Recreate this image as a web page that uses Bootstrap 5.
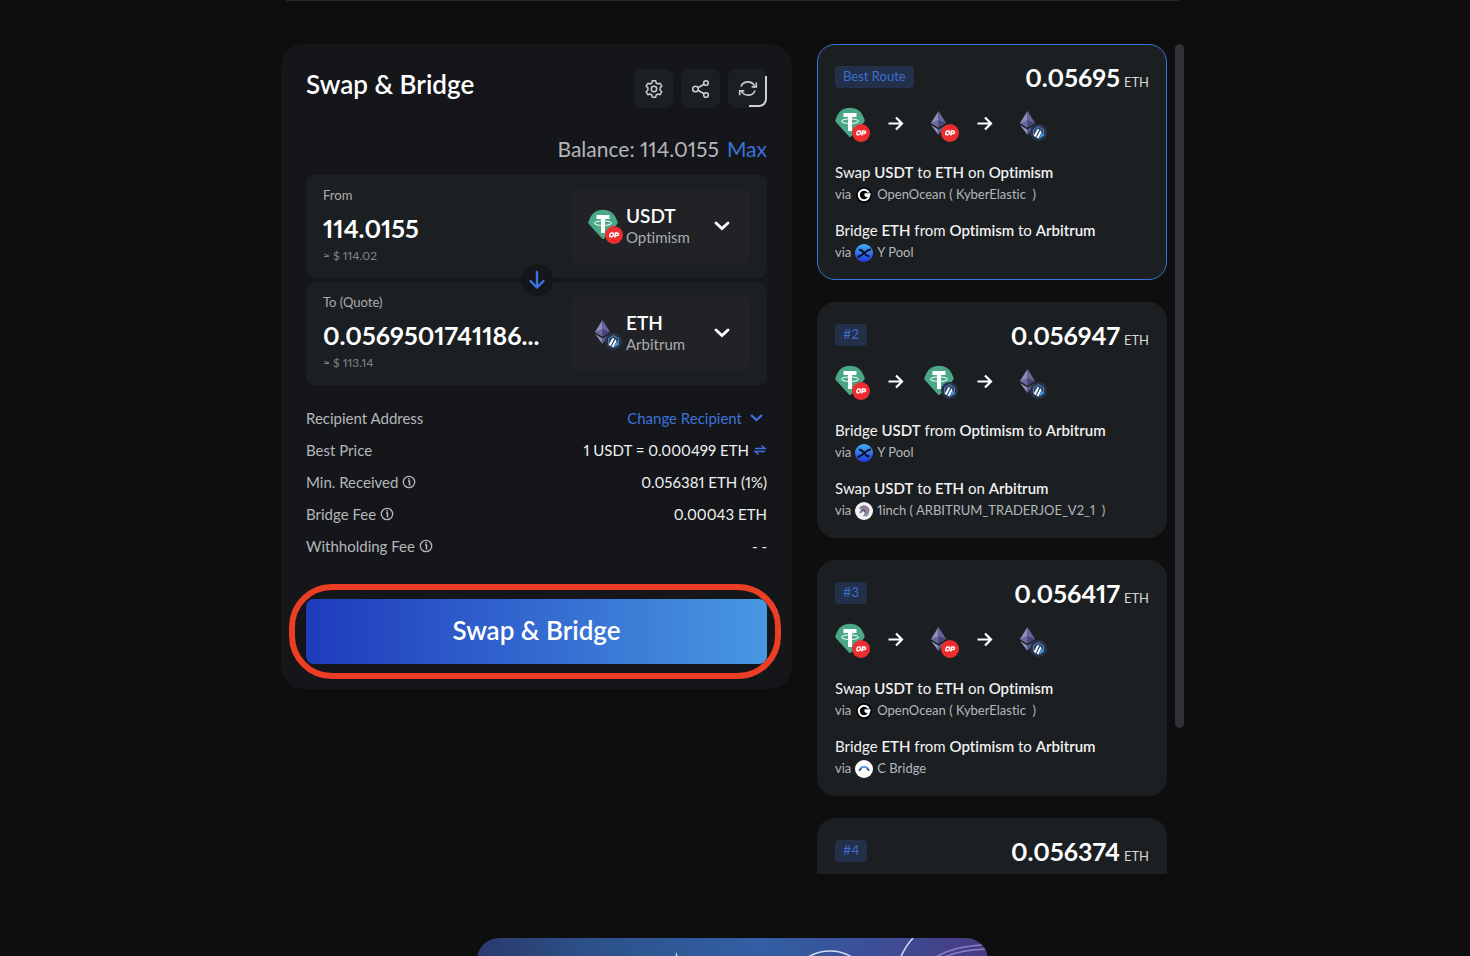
<!DOCTYPE html>
<html lang="en" data-bs-theme="dark">
<head>
<meta charset="utf-8">
<meta name="viewport" content="width=device-width, initial-scale=1">
<title>Swap &amp; Bridge</title>
<link href="https://cdn.jsdelivr.net/npm/bootstrap@5.3.0/dist/css/bootstrap.min.css" rel="stylesheet">
<style>
  :root { --accent: #3b72dc; --panel: #1c1f22; --card-bg: #15161a; --soft: #b4b7ba; }
  body { background: #0e0e0e; color: #f2f2f2; font-family: Lato, "Liberation Sans", sans-serif; font-size: 15px; line-height: 22px; font-variant-ligatures: none; font-variant-numeric: proportional-nums; }
  input, button { font-variant-ligatures: inherit; font-variant-numeric: inherit; }
  .page { height: 100vh; overflow: hidden; padding-right: 5px; }
  .top-rule { max-width: 893px; height: 1px; background: #26282b; }
  .shell { max-width: 903px; padding-top: 43px; grid-template-columns: 511fr 367fr; gap: 25px; }
  .swap-card { min-width: 0; background: var(--card-bg); border-radius: 22px; padding: 25px; }
  .routes { min-width: 0; height: 830px; }
  .route-list { gap: 22px; }
  .title { font-size: 26px; line-height: 30px; font-weight: 600; }
  .tool { width: 39px; height: 39px; padding: 0; border: 0; border-radius: 8px; background: var(--panel); color: #c9ccd0; display: flex; align-items: center; justify-content: center; }
  .timer { right: -1px; bottom: 0; }
  .balance { font-size: 21px; line-height: 28px; color: var(--soft); margin-top: 27px; margin-bottom: 12px; }
  .blue, .blue:hover { color: var(--accent); text-decoration: none; background: none; border: 0; padding: 0; }
  .panel { background: var(--panel); border-radius: 8px; padding: 12px 17px 15px; height: 103px; }
  .panel label, .fiat { font-size: 13px; line-height: 16px; color: #a9acaf; }
  .panel .fiat { font-size: 12px; color: #7f858c; }
  .amount { font-size: 25px; line-height: 32px; font-weight: 700; color: #fff; background: none; border: 0; padding: 0; width: 100%; margin: 9px 0 4px; text-overflow: ellipsis; outline: 0; }
  .amount-box { width: 228px; }
  .token { width: 179px; height: 76px; margin-top: 1px; background: #202226; border: 0; border-radius: 8px; padding: 0 20px 0 17px; color: #fff; }
  .token-text { margin-left: 2px; }
  .token-name { font-size: 19px; line-height: 22px; font-weight: 600; }
  .token-chain { line-height: 20px; color: #a9acaf; }
  .flip { width: 32px; height: 32px; border-radius: 50%; background: var(--card-bg); border: 0; padding: 0; color: var(--accent); display: flex; align-items: center; justify-content: center; }
  .details { margin-top: 17px; color: var(--soft); }
  .details dt { font-weight: 400; }
  .details dd { color: #f0f0f0; }
  .details > div { height: 32px; }
  .cta-wrap { margin-top: 37px; }
  .cta { height: 65px; border: 0; border-radius: 8px; padding: 0 0 4px; color: #fff; font-size: 26px; font-weight: 600; background: linear-gradient(90deg, #1f3bbd, #4898e2); }
  .ring { inset: -15px -14px -15px -17px; border: 6px solid #ec3e24; border-radius: 43px; pointer-events: none; }
  .route { height: 236px; flex: none; background: var(--panel); border: 1px solid var(--panel); border-radius: 18px; padding: 16px 17px; }
  .route.best { border-color: var(--accent); }
  .route-head { height: 32px; }
  .tag { font-size: 13px; line-height: 18px; padding: 1px 8px 3px; border-radius: 4px; background: #22304a; color: #3d6fd0; }
  .quote { font-size: 25px; line-height: 32px; font-weight: 700; color: #fff; }
  .unit { font-size: 13px; line-height: 16px; color: #d5d6d8; font-weight: 400; }
  .hops { margin: 13px 0 19px; }
  .hops > :nth-child(even) { margin: 0 18px 0 17px; }
  .step + .step { margin-top: 13px; }
  .step b { font-weight: 600; }
  .via { font-size: 13px; line-height: 23px; color: var(--soft); }
  .thumb { width: 9px; height: 82.4%; background: #2e3236; border-radius: 5px; }
  .promo { max-width: 511px; height: 160px; margin-top: 64px; border-radius: 22px; overflow: hidden; background: linear-gradient(90deg, #2b3a6c, #2c5189 22%, #325fa4 55%, #3d4d94 80%, #473a82); }
</style>
</head>
<body>
<svg width="0" height="0" class="d-block">
  <defs>
    <linearGradient id="pool" x1="0" y1="0" x2="0" y2="1"><stop offset="0" stop-color="#3fb0f5"/><stop offset="1" stop-color="#2436e0"/></linearGradient>
    <symbol id="usdt" viewBox="0 0 30 31"><path d="M2.500 8Q6.500 .8 15 .8T27.500 8L29.500 12.500Q30.100 14 29 15.200L16 29.500Q15 30.500 14 29.500L1 15.200Q-.1 14 .5 12.500Z" fill="#4aa886"/><path d="M8.500 6h13v4H17v14h-4V10H8.500z" fill="#fff"/><ellipse cx="15" cy="14.200" rx="8.500" ry="2.300" fill="none" stroke="#fff" stroke-width="1"/></symbol>
    <symbol id="eth" viewBox="0 0 15 24"><path d="M7.500 0 0 12l7.500 4.500z" fill="#8f8dbb"/><path d="M7.500 0 15 12l-7.500 4.500z" fill="#67669b"/><path d="M0 12 7.500 9v7.500z" fill="#6a699f"/><path d="M15 12 7.500 9v7.500z" fill="#454475"/><path d="M0 14l7.500 4.500V24z" fill="#8f8dbb"/><path d="M15 14l-7.500 4.500V24z" fill="#5d5c8f"/></symbol>
    <symbol id="op" viewBox="0 0 18 18"><circle cx="9" cy="9" r="9" fill="#ee2d31"/><g fill="none" stroke="#fff" stroke-width="1.500"><rect x="4.900" y="7" width="3.400" height="3.800" rx="1.400" transform="skewX(-12)" transform-origin="7 9"/><path d="M9.700 11.500 10.500 7.100h1.800c1.800 0 1.500 2.500-.3 2.500h-1.600"/></g></symbol>
    <symbol id="arb" viewBox="0 0 18 18"><circle cx="9" cy="9" r="9" fill="#27344c"/><path d="M9 2.800 14.300 5.900v6.200L9 15.200 3.700 12.100V5.900z" fill="#26456e" stroke="#7298c0" stroke-width=".8"/><path d="M4 12.500 7.700 5.500h2.200L6 13.700zM7 14.200 11 6.500l1.200 2.300L9 15z" fill="#fff"/><path d="m10.500 12.800 2-3.900 1.700 3.300L11 14.500z" fill="#3a9bea"/></symbol>
    <symbol id="usdt-op" viewBox="0 0 36 36"><use href="#usdt" x="0" y="1" width="30" height="31"/><use href="#op" x="17" y="18" width="18" height="18"/></symbol>
    <symbol id="usdt-arb" viewBox="0 0 36 36"><use href="#usdt" x="0" y="1" width="30" height="31"/><use href="#arb" x="17" y="18" width="17" height="17"/></symbol>
    <symbol id="eth-op" viewBox="0 0 36 36"><use href="#eth" x="7" y="5" width="15" height="24"/><use href="#op" x="17" y="18" width="18" height="18"/></symbol>
    <symbol id="eth-arb" viewBox="0 0 36 36"><use href="#eth" x="7" y="5" width="15" height="24"/><use href="#arb" x="17" y="18" width="17" height="17"/></symbol>
    <symbol id="arrow" viewBox="0 0 18 18"><path d="M.5 8.500H14M8 2.500l6 6-6 6" fill="none" stroke="#fff" stroke-width="2.200"/></symbol>
    <symbol id="chev" viewBox="0 0 16 10"><path d="M2 2l6 5.500L14 2" fill="none" stroke="currentColor" stroke-width="2.800" stroke-linecap="round"/></symbol>
    <symbol id="info" viewBox="0 0 14 14"><circle cx="7" cy="7" r="5.700" fill="none" stroke="currentColor" stroke-width="1.300"/><path d="M6 6h1.500v4.500M7 3v1.600" fill="none" stroke="currentColor" stroke-width="1.500"/></symbol>
    <symbol id="ocean" viewBox="0 0 18 18"><circle cx="9" cy="9" r="8" fill="#050505"/><circle cx="9" cy="9" r="5.200" fill="none" stroke="#fff" stroke-width="2"/><path d="M9.500 7.200h6.200c0 4-4 4.500-6.200 2.800z" fill="#fff"/><path d="M12.500 6.800h3.500" stroke="#050505" stroke-width=".7"/></symbol>
    <symbol id="ypool" viewBox="0 0 18 18"><circle cx="9" cy="9" r="9" fill="url(#pool)"/><path d="M2.500 12.800C7 13 10.500 5.500 16 5.400M4 6c3-.8 3.500 1 5 3s2.500 3.600 5.500 3.300" fill="none" stroke="#081226" stroke-width="2"/></symbol>
    <symbol id="inch" viewBox="0 0 18 18"><circle cx="9" cy="9" r="9" fill="#f3f3f5"/><path d="M3.500 6.500C6 2.500 12 2 14 7c1 3-.5 6-2.500 7.500L7.500 14c2-1.500 2.500-3 1.500-4.500-1.500.5-3 2-5 2 .5-2 1.500-3.500 2.500-4z" fill="#8b8ba2"/><path d="M7 4.500c4-1.500 7 1.500 6.500 5" fill="none" stroke="#a64b58" stroke-width="1"/><path d="M6.500 8.500 9 7.500l1.500 3" fill="none" stroke="#3f435c" stroke-width="1"/></symbol>
    <symbol id="cbridge" viewBox="0 0 18 18"><circle cx="9" cy="9" r="9" fill="#fff"/><path d="M4.500 11C5.500 5.700 12 5.500 14 10.500" fill="none" stroke="#4e8fd8" stroke-width="1.700"/><path d="M4 11c.5-1.500 1.500-2.300 3-2.300M11.500 8.500c1.500.5 2 1.500 2.300 2.500" fill="none" stroke="#3c4a66" stroke-width="1.200"/></symbol>
  </defs>
</svg>

<div class="page">
  <div class="top-rule mx-auto"></div>
  <main class="shell mx-auto d-grid align-items-start">
    <section class="swap-card">
      <div class="d-flex justify-content-between align-items-start">
        <h1 class="title mb-0">Swap &amp; Bridge</h1>
        <div class="d-flex gap-2">
          <button class="tool" type="button" aria-label="Settings"><svg width="20" height="20" viewBox="0 0 20 20" fill="none" stroke="currentColor" stroke-width="1.500" stroke-linejoin="round"><path d="M8.300 1.800h3.400l.5 2.200 1.700 1 2.200-.7 1.700 2.900-1.700 1.600v2.400l1.700 1.600-1.700 2.900-2.200-.7-1.700 1-.5 2.200H8.300l-.5-2.200-1.700-1-2.200.7-1.700-2.900 1.700-1.600V8.800L2.200 7.200l1.700-2.900 2.200.7 1.700-1z"/><circle cx="10" cy="10" r="2.700"/></svg></button>
          <button class="tool" type="button" aria-label="Share"><svg width="20" height="20" viewBox="0 0 20 20" fill="none" stroke="currentColor" stroke-width="1.600"><circle cx="4.500" cy="10" r="2.800"/><circle cx="15" cy="4" r="2.300"/><circle cx="15" cy="16" r="2.300"/><path d="m7 8.700 6-3.500M7 11.300l6 3.500"/></svg></button>
          <button class="tool position-relative" type="button" aria-label="Refresh"><svg width="20" height="20" viewBox="0 0 20 20" fill="none" stroke="currentColor" stroke-width="1.600"><path d="M3 7.500C5 2 13 1 16.700 6.800M17 11.500c-2 5.500-10 6.500-13.700.9"/><path d="M18.300 3.500v4.400h-4.600M1.700 16.300v-4.400h4.600"/></svg>
            <svg class="timer position-absolute" width="20" height="32" viewBox="0 0 20 32" fill="none" stroke="#cfd1d4" stroke-width="2"><path d="M18 0v23a7 7 0 0 1-7 7H1"/></svg></button>
        </div>
      </div>
      <div class="balance d-flex justify-content-end gap-2"><span>Balance: 114.0155</span><button type="button" class="blue">Max</button></div>

      <div class="position-relative d-grid gap-1">
        <div class="panel d-flex justify-content-between">
          <div class="amount-box d-flex flex-column">
            <label for="from">From</label>
            <input id="from" class="amount" type="text" value="114.0155">
            <div class="fiat">≈ $ 114.02</div>
          </div>
          <button type="button" class="token d-flex align-items-center text-start">
            <svg width="36" height="36"><use href="#usdt-op"/></svg>
            <span class="token-text flex-grow-1"><span class="token-name d-block">USDT</span><span class="token-chain d-block">Optimism</span></span>
            <svg width="16" height="10"><use href="#chev"/></svg>
          </button>
        </div>
        <div class="panel d-flex justify-content-between">
          <div class="amount-box d-flex flex-column">
            <label for="to">To (Quote)</label>
            <input id="to" class="amount" type="text" readonly value="0.0569501741186...">
            <div class="fiat">≈ $ 113.14</div>
          </div>
          <button type="button" class="token d-flex align-items-center text-start">
            <svg width="36" height="36"><use href="#eth-arb"/></svg>
            <span class="token-text flex-grow-1"><span class="token-name d-block">ETH</span><span class="token-chain d-block">Arbitrum</span></span>
            <svg width="16" height="10"><use href="#chev"/></svg>
          </button>
        </div>
        <button type="button" class="flip position-absolute top-50 start-50 translate-middle" aria-label="Switch direction"><svg width="18" height="20" viewBox="0 0 18 20" fill="none" stroke="currentColor" stroke-width="2.400" stroke-linecap="round"><path d="M9 2v15.500M2.500 11 9 17.500l6.500-6.500"/></svg></button>
      </div>

      <dl class="details mb-0">
        <div class="d-flex justify-content-between align-items-center"><dt>Recipient Address</dt><dd class="mb-0"><button type="button" class="blue d-flex align-items-center gap-2">Change Recipient<svg class="me-1" width="13" height="8" viewBox="0 0 16 10"><use href="#chev" width="16" height="10"/></svg></button></dd></div>
        <div class="d-flex justify-content-between align-items-center"><dt>Best Price</dt><dd class="mb-0 d-flex align-items-center gap-1">1 USDT = 0.000499 ETH <svg class="blue" width="14" height="12" viewBox="0 0 14 12" fill="none" stroke="currentColor" stroke-width="1.600"><path d="M2 4.500h10L8.500 1.500M12 7.500H2l3.500 3"/></svg></dd></div>
        <div class="d-flex justify-content-between align-items-center"><dt class="d-flex align-items-center gap-1">Min. Received <svg width="14" height="14"><use href="#info"/></svg></dt><dd class="mb-0">0.056381 ETH (1%)</dd></div>
        <div class="d-flex justify-content-between align-items-center"><dt class="d-flex align-items-center gap-1">Bridge Fee <svg width="14" height="14"><use href="#info"/></svg></dt><dd class="mb-0">0.00043 ETH</dd></div>
        <div class="d-flex justify-content-between align-items-center"><dt class="d-flex align-items-center gap-1">Withholding Fee <svg width="14" height="14"><use href="#info"/></svg></dt><dd class="mb-0">- -</dd></div>
      </dl>

      <div class="cta-wrap position-relative">
        <button type="button" class="cta w-100 d-block">Swap &amp; Bridge</button>
        <div class="ring position-absolute"></div>
      </div>
    </section>

    <section class="routes d-flex gap-2">
      <div class="route-list flex-grow-1 h-100 overflow-hidden d-flex flex-column">
        <article class="route best">
          <div class="route-head d-flex justify-content-between align-items-center"><span class="tag">Best Route</span><span class="d-flex align-items-baseline gap-1"><span class="quote">0.05695</span> <span class="unit">ETH</span></span></div>
          <div class="hops d-flex align-items-center"><svg width="36" height="36"><use href="#usdt-op"/></svg><svg width="18" height="18"><use href="#arrow"/></svg><svg width="36" height="36"><use href="#eth-op"/></svg><svg width="18" height="18"><use href="#arrow"/></svg><svg width="36" height="36"><use href="#eth-arb"/></svg></div>
          <div class="step"><div>Swap <b>USDT</b> to <b>ETH</b> on <b>Optimism</b></div><div class="via d-flex align-items-center gap-1">via <svg width="18" height="18"><use href="#ocean"/></svg><span>OpenOcean ( KyberElastic &nbsp;)</span></div></div>
          <div class="step"><div>Bridge <b>ETH</b> from <b>Optimism</b> to <b>Arbitrum</b></div><div class="via d-flex align-items-center gap-1">via <svg width="18" height="18"><use href="#ypool"/></svg><span>Y Pool</span></div></div>
        </article>
        <article class="route">
          <div class="route-head d-flex justify-content-between align-items-center"><span class="tag">#2</span><span class="d-flex align-items-baseline gap-1"><span class="quote">0.056947</span> <span class="unit">ETH</span></span></div>
          <div class="hops d-flex align-items-center"><svg width="36" height="36"><use href="#usdt-op"/></svg><svg width="18" height="18"><use href="#arrow"/></svg><svg width="36" height="36"><use href="#usdt-arb"/></svg><svg width="18" height="18"><use href="#arrow"/></svg><svg width="36" height="36"><use href="#eth-arb"/></svg></div>
          <div class="step"><div>Bridge <b>USDT</b> from <b>Optimism</b> to <b>Arbitrum</b></div><div class="via d-flex align-items-center gap-1">via <svg width="18" height="18"><use href="#ypool"/></svg><span>Y Pool</span></div></div>
          <div class="step"><div>Swap <b>USDT</b> to <b>ETH</b> on <b>Arbitrum</b></div><div class="via d-flex align-items-center gap-1">via <svg width="18" height="18"><use href="#inch"/></svg><span>1inch ( ARBITRUM_TRADERJOE_V2_1 &nbsp;)</span></div></div>
        </article>
        <article class="route">
          <div class="route-head d-flex justify-content-between align-items-center"><span class="tag">#3</span><span class="d-flex align-items-baseline gap-1"><span class="quote">0.056417</span> <span class="unit">ETH</span></span></div>
          <div class="hops d-flex align-items-center"><svg width="36" height="36"><use href="#usdt-op"/></svg><svg width="18" height="18"><use href="#arrow"/></svg><svg width="36" height="36"><use href="#eth-op"/></svg><svg width="18" height="18"><use href="#arrow"/></svg><svg width="36" height="36"><use href="#eth-arb"/></svg></div>
          <div class="step"><div>Swap <b>USDT</b> to <b>ETH</b> on <b>Optimism</b></div><div class="via d-flex align-items-center gap-1">via <svg width="18" height="18"><use href="#ocean"/></svg><span>OpenOcean ( KyberElastic &nbsp;)</span></div></div>
          <div class="step"><div>Bridge <b>ETH</b> from <b>Optimism</b> to <b>Arbitrum</b></div><div class="via d-flex align-items-center gap-1">via <svg width="18" height="18"><use href="#cbridge"/></svg><span>C Bridge</span></div></div>
        </article>
        <article class="route">
          <div class="route-head d-flex justify-content-between align-items-center"><span class="tag">#4</span><span class="d-flex align-items-baseline gap-1"><span class="quote">0.056374</span> <span class="unit">ETH</span></span></div>
        </article>
      </div>
      <div class="thumb flex-shrink-0"></div>
    </section>
  </main>
  <div class="promo mx-auto"><svg class="d-block w-100" height="160" viewBox="0 0 511 160" fill="none" stroke="#d5dcf5" stroke-width="1.500"><path d="M199.500 14l3 12 6 3-9 3-9-3 6-3z" fill="#d5dcf5" stroke="none"/><circle cx="353" cy="55" r="42"/><path d="M436 0q-14 15-18 40"/><path d="M455 22q16-13 50-15M462 22q16-10 48-11" stroke="#8a7fc4"/></svg></div>
</div>
<script src="https://cdn.jsdelivr.net/npm/bootstrap@5.3.0/dist/js/bootstrap.bundle.min.js"></script>
</body>
</html>
